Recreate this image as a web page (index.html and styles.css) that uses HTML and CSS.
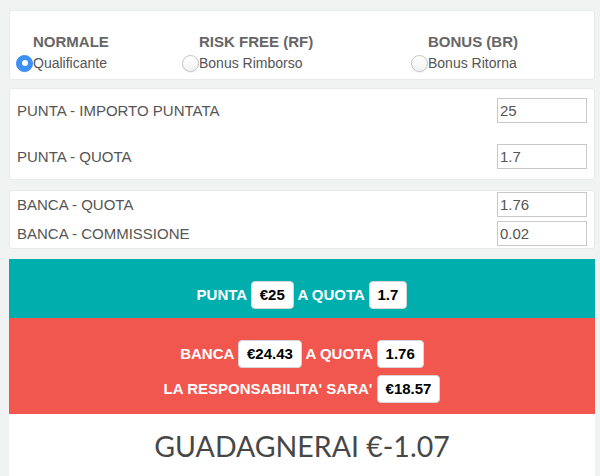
FILE: index.html
```html
<html>

<head>
  <meta charset="utf8">
  <title>Calcolatore Matched Betting</title>
  <link rel="stylesheet" href="styles.css">
</head>

<body>
  <div class="wrap">
    <section class="card modes">
      <div class="mode">
        <h3>NORMALE</h3>
        <label class="opt"><span class="radio checked"></span>Qualificante</label>
      </div>
      <div class="mode">
        <h3>RISK FREE (RF)</h3>
        <label class="opt"><span class="radio"></span>Bonus Rimborso</label>
      </div>
      <div class="mode">
        <h3>BONUS (BR)</h3>
        <label class="opt"><span class="radio"></span>Bonus Ritorna</label>
      </div>
    </section>

    <section class="card fields punta">
      <div class="row">
        <label for="stake">PUNTA - IMPORTO PUNTATA</label>
        <input id="stake" type="text" value="25">
      </div>
      <div class="row">
        <label for="back-odds">PUNTA - QUOTA</label>
        <input id="back-odds" type="text" value="1.7">
      </div>
    </section>

    <section class="card fields banca">
      <div class="row">
        <label for="lay-odds">BANCA - QUOTA</label>
        <input id="lay-odds" type="text" value="1.76">
      </div>
      <div class="row">
        <label for="commission">BANCA - COMMISSIONE</label>
        <input id="commission" type="text" value="0.02">
      </div>
    </section>

    <div class="band back">
      <p>PUNTA <span class="pill">€25</span> A QUOTA <span class="pill">1.7</span></p>
    </div>
    <div class="band lay">
      <p>BANCA <span class="pill">€24.43</span> A QUOTA <span class="pill">1.76</span></p>
      <p>LA RESPONSABILITA' SARA' <span class="pill">€18.57</span></p>
    </div>
    <div class="result">GUADAGNERAI €-1.07</div>
  </div>
</body>

</html>
```

FILE: styles.css
```css
body {
  margin: 0;
  background: #f1f2f2;
  font: 14px/18px "Liberation Sans", Arial, sans-serif;
  color: #555;
  overflow: hidden;
}

.wrap {
  width: 586px;
  margin: 10px 0 0 9px;
}

.card {
  box-sizing: border-box;
  background: #fff;
  border: 1px solid #e8e9e9;
  border-radius: 3px;
}

/* bet type */

.modes {
  display: grid;
  grid-template-columns: 166px 229px 1fr;
  height: 70px;
  padding: 22px 0 0 23px;
}

.mode h3 {
  margin: 0 0 3px;
  font-size: 15px;
  line-height: 18px;
  font-weight: bold;
  color: #666;
}

.opt {
  display: flex;
  align-items: center;
  margin-left: -17px;
  height: 18px;
  font-size: 14px;
  color: #555;
}

.radio {
  box-sizing: border-box;
  width: 17px;
  height: 17px;
  border-radius: 50%;
  border: 1px solid #c4c4c4;
  background: linear-gradient(#fff, #f3f3f3);
  box-shadow: 0 1px 1px rgba(0, 0, 0, 0.06);
}

.radio.checked {
  position: relative;
  border-color: #3b8ef3;
  background: #3d90f7;
}

.radio.checked::after {
  content: "";
  position: absolute;
  left: 4.5px;
  top: 4.5px;
  width: 6px;
  height: 6px;
  border-radius: 50%;
  background: #fff;
}

/* inputs */

.fields {
  display: flex;
  flex-direction: column;
  margin-top: 8px;
}

.fields .row {
  display: flex;
  justify-content: space-between;
  align-items: center;
}

.fields label {
  font-size: 15px;
  color: #555;
}

.fields input {
  box-sizing: border-box;
  width: 90px;
  height: 25px;
  margin: 0;
  padding: 0 2px;
  border: 1px solid #c8c8c8;
  border-radius: 0;
  font: 15px "Liberation Sans", Arial, sans-serif;
  color: #555;
  outline: none;
}

.punta {
  gap: 21px;
  padding: 9px 7px 10px 7px;
}

.banca {
  gap: 4px;
  margin-top: 10px;
  padding: 1px 7px 2px 7px;
}

/* summary */

.band {
  display: flex;
  flex-direction: column;
  gap: 7px;
  padding: 22px 0 9px;
  color: #fff;
  font-size: 15px;
  font-weight: bold;
  text-align: center;
}

.band p {
  margin: 0;
  line-height: 28px;
}

.back {
  margin-top: 10px;
  background: #00aeae;
}

.lay {
  padding-bottom: 11px;
  background: #f2574f;
}

.pill {
  display: inline-block;
  box-sizing: border-box;
  height: 28px;
  padding: 0 8px;
  border: 1px solid #d6d6d6;
  border-radius: 4px;
  background: #fff;
  color: #000;
  line-height: 26px;
  vertical-align: top;
}

.result {
  height: 80px;
  padding-top: 14px;
  background: #fff;
  font: 28.5px/36px Lato, "Open Sans", sans-serif;
  color: #474747;
  text-align: center;
  box-sizing: border-box;
}
```
